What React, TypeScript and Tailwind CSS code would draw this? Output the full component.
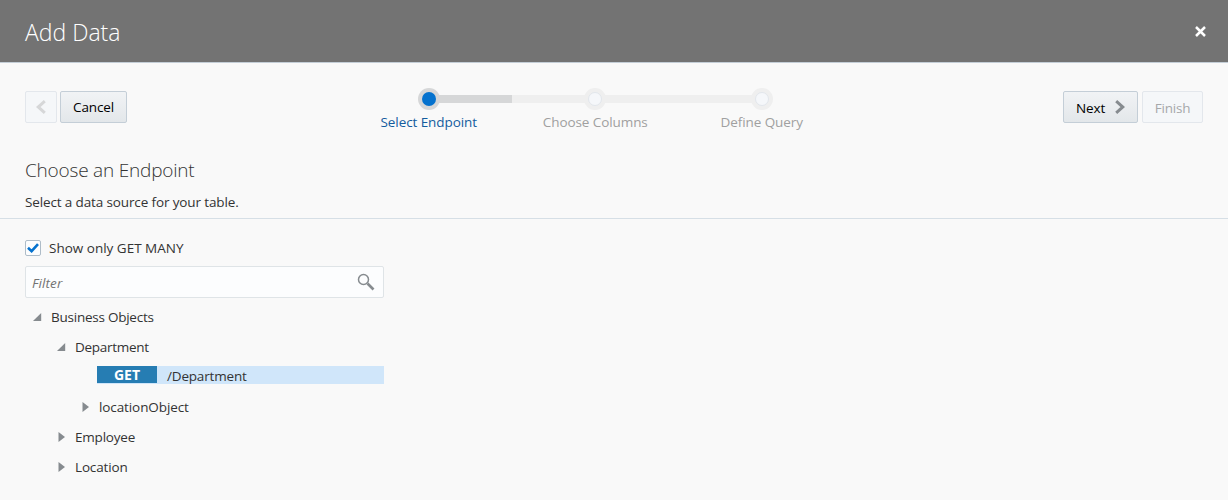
import type { ReactNode } from "react";

function TreeRow({ indent, open, textClass, children }: { indent: string; open?: boolean; textClass: string; children: ReactNode }) {
  return (
    <div className={`flex h-[30px] items-center ${indent}`}>
      <svg className="mr-[9px] block h-[10px] w-[9px] shrink-0" viewBox="0 0 9 10" fill="#868b8f">
        {open ? <path d="M8.2 1v8H0z" /> : <path d="M1.5 0v10L8 5z" />}
      </svg>
      <span className={`leading-5 ${textClass}`}>{children}</span>
    </div>
  );
}

function Step({ label, active, labelClass }: { label: string; active?: boolean; labelClass: string }) {
  return (
    <div className="flex w-[166.5px] flex-col items-center">
      <div className={`flex size-[22px] items-center justify-center rounded-full ${active ? "bg-[#d6d7d8]" : "bg-[#efefef]"}`}>
        <div className={`size-[14px] rounded-full ${active ? "bg-[#0572ce]" : "border border-[#e2e6ec] bg-[#f5f7fa]"}`} />
      </div>
      <span className={`mt-[2px] leading-5 tracking-[-0.08px] whitespace-nowrap ${labelClass}`}>{label}</span>
    </div>
  );
}

export default function App() {
  return (
    <div className="h-[500px] w-[1228px] overflow-hidden bg-[#f9f9f9] font-['Open_Sans','Noto_Sans',sans-serif] text-[13.5px] text-[#333333]">
      <header className="flex h-[63px] items-center justify-between border-b border-[#c4ced7] bg-[#737373] pr-[22px] pl-[25px] text-white">
        <h1 className="mt-[3px] text-[23px] font-light whitespace-nowrap">Add Data</h1>
        <svg className="block size-[11px]" viewBox="0 0 11 11" stroke="#fff" strokeWidth="2.5">
          <path d="M1 1l9 9M10 1l-9 9" />
        </svg>
      </header>

      <div className="flex h-[90px] items-start pl-[25px]">
        <div className="mt-[28px] flex gap-[3px]">
          <button className="flex h-8 w-8 items-center justify-center rounded-[2px] border border-[#e3e7ec] bg-[#f5f7f9]">
            <svg className="block h-[14px] w-[10px]" viewBox="0 0 10 14" fill="none" stroke="#d6d7d8" strokeWidth="3">
              <path d="M8.8 1.2L2.2 7l6.6 5.8" />
            </svg>
          </button>
          <button className="flex h-8 w-[67px] items-center justify-center rounded-[2px] border border-[#c4ced7] bg-linear-to-b from-[#f1f3f5] to-[#e3e7ea] pt-px tracking-[-0.15px] text-black">
            Cancel
          </button>
        </div>

        <div className="relative mt-[25px] ml-[218px] flex w-[501px]">
          <div className="absolute top-[7px] left-[83px] flex h-[8px] w-[334px]">
            <div className="w-[84px] bg-[#d6d7d8]" />
            <div className="flex-1 bg-[#efefef]" />
          </div>
          <div className="relative flex pl-[0.5px]">
            <Step label="Select Endpoint" active labelClass="text-[#145c9e]" />
            <Step label="Choose Columns" labelClass="text-[#a0a0a0]" />
            <Step label="Define Query" labelClass="text-[#a0a0a0]" />
          </div>
        </div>

        <div className="mt-[28px] mr-[25px] ml-auto flex gap-1">
          <button className="flex h-8 w-[75px] items-center rounded-[2px] border border-[#c4ced7] bg-linear-to-b from-[#f1f3f5] to-[#e3e7ea] pl-[12px] text-black">
            <span className="w-[39px] pt-[2px] text-left tracking-[-0.1px]">Next</span>
            <svg className="block h-[14px] w-[10px]" viewBox="0 0 10 14" fill="none" stroke="#868b8f" strokeWidth="3">
              <path d="M1.2 1.2L7.8 7l-6.6 5.8" />
            </svg>
          </button>
          <button className="flex h-8 w-[61px] items-center justify-center rounded-[2px] border border-[#e3e7ec] bg-[#f5f7f9] pt-[2px] tracking-[-0.2px] text-[#a6a8aa]">
            Finish
          </button>
        </div>
      </div>

      <section className="h-[66px] border-b border-[#d6dfe6] pl-[25px]">
        <h2 className="pt-[3px] text-[19px] leading-7 font-light tracking-[-0.2px]">Choose an Endpoint</h2>
        <p className="mt-[8px] leading-5 tracking-[-0.13px]">Select a data source for your table.</p>
      </section>

      <section className="w-[384px] pt-[18px] pl-[25px]">
        <label className="flex h-[22px] items-center gap-2">
          <span className="flex size-4 items-center justify-center rounded-[2px] border border-[#aebcc8] bg-[#fcfdfe]">
            <svg className="block h-[10px] w-[12px]" viewBox="0 0 12 10" fill="none" stroke="#0572ce" strokeWidth="2.6">
              <path d="M1 4.8l3.6 3.4L11 1.2" />
            </svg>
          </span>
          <span className="leading-5">Show only GET MANY</span>
        </label>
        <div className="mt-[7px] flex h-8 items-center justify-between rounded-[2px] border border-[#dfe4e7] bg-[#fcfdfe] pr-[8px] pl-[6px]">
          <span className="pt-[2px] tracking-[0.1px] text-[#737373] italic">Filter</span>
          <svg className="block size-[18px]" viewBox="0 0 18 18" fill="none" stroke="#868b8f">
            <circle cx="6.5" cy="6.5" r="5" strokeWidth="1.5" />
            <path d="M10.5 10.5l6 6" strokeWidth="2.6" />
          </svg>
        </div>
        <div className="mt-[4px]">
          <TreeRow indent="pl-[8px]" textClass="tracking-[-0.24px]" open>Business Objects</TreeRow>
          <TreeRow indent="pl-[32px]" textClass="tracking-[-0.28px]" open>Department</TreeRow>
          <div className="flex h-[30px] items-start pt-[4px] pl-[72px]">
            <div className="flex h-[18px] w-full bg-[#d0e6fa]">
              <span className="flex h-[17px] w-[60px] items-center justify-center bg-[#267db3] text-[14px] leading-[17px] font-bold text-white">GET</span>
              <span className="ml-[10px] leading-5 tracking-[-0.18px]">/Department</span>
            </div>
          </div>
          <TreeRow indent="pl-[56px]" textClass="tracking-[-0.1px]">locationObject</TreeRow>
          <TreeRow indent="pl-[32px]" textClass="tracking-[-0.2px]">Employee</TreeRow>
          <TreeRow indent="pl-[32px]" textClass="tracking-[-0.15px]">Location</TreeRow>
        </div>
      </section>
    </div>
  );
}
